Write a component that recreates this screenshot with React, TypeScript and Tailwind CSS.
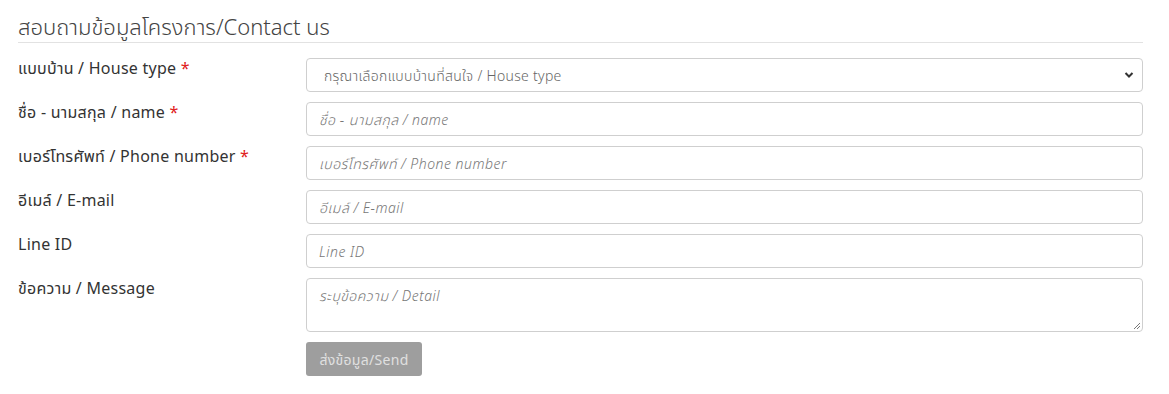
import React from "react";

const font = { fontFamily: '"Noto Sans", "Noto Sans Thai", Lato, sans-serif' };

function Label({ text, req }: { text: string; req?: boolean }) {
  return (
    <div className="w-[288px] shrink-0 text-[16px] text-[#333] leading-[22px] -mt-[1px] tracking-[0.25px]">
      {text}
      {req && <span className="text-[#e02020]"> *</span>}
    </div>
  );
}

export default function App() {
  const rows: { label: string; req?: boolean; ph: string }[] = [
    { label: "ชื่อ - นามสกุล / name", req: true, ph: "ชื่อ - นามสกุล / name" },
    { label: "เบอร์โทรศัพท์ / Phone number", req: true, ph: "เบอร์โทรศัพท์ / Phone number" },
    { label: "อีเมล์ / E-mail", ph: "อีเมล์ / E-mail" },
    { label: "Line ID", ph: "Line ID" },
  ];
  return (
    <div className="w-[1169px] h-[394px] bg-white px-[18px] pt-[11px]" style={font}>
      <div className="w-[1125px]">
        <h2 className="text-[22px] font-light text-[#444] leading-[31px] border-b border-[#e2e2e2]">
          สอบถามข้อมูลโครงการ/Contact us
        </h2>
        <div className="mt-[15px] flex flex-col gap-[10px]">
          <div className="flex">
            <Label text="แบบบ้าน / House type" req />
            <div className="flex-1 h-[34px] border border-[#cfcfcf] rounded-[4px] flex items-center justify-between pl-[17px] pr-[8px]">
              <span className="text-[14px] font-light text-[#666] tracking-[0.3px]">กรุณาเลือกแบบบ้านที่สนใจ / House type</span>
              <svg width="10" height="8" viewBox="0 0 10 8">
                <path d="M1.5 2 L5 5.5 L8.5 2" stroke="#333" strokeWidth="2" fill="none" />
              </svg>
            </div>
          </div>
          {rows.map((r) => (
            <div className="flex" key={r.label}>
              <Label text={r.label} req={r.req} />
              <div className="flex-1 h-[34px] border border-[#cfcfcf] rounded-[4px] flex items-center pl-[12px]">
                <span className="text-[14px] font-light text-[#777] italic tracking-[0.5px]">{r.ph}</span>
              </div>
            </div>
          ))}
          <div className="flex">
            <Label text="ข้อความ / Message" />
            <div className="relative flex-1 h-[54px] border border-[#cfcfcf] rounded-[4px] pl-[12px] pt-[4px]">
              <span className="text-[14px] font-light text-[#777] italic tracking-[0.5px]">ระบุข้อความ / Detail</span>
              <svg className="absolute right-[1px] bottom-[1px]" width="9" height="9" viewBox="0 0 9 9">
                <path d="M8 2 L2 8 M8 5 L5 8" stroke="#777" strokeWidth="1" />
              </svg>
            </div>
          </div>
          <div className="flex">
            <div className="w-[288px] shrink-0" />
            <div className="w-[116px] h-[34px] bg-[#9e9e9e] rounded-[3px] flex items-center justify-center text-[14px] text-[#e0e0e0] tracking-[0.3px]">
              ส่งข้อมูล/Send
            </div>
          </div>
        </div>
      </div>
    </div>
  );
}
